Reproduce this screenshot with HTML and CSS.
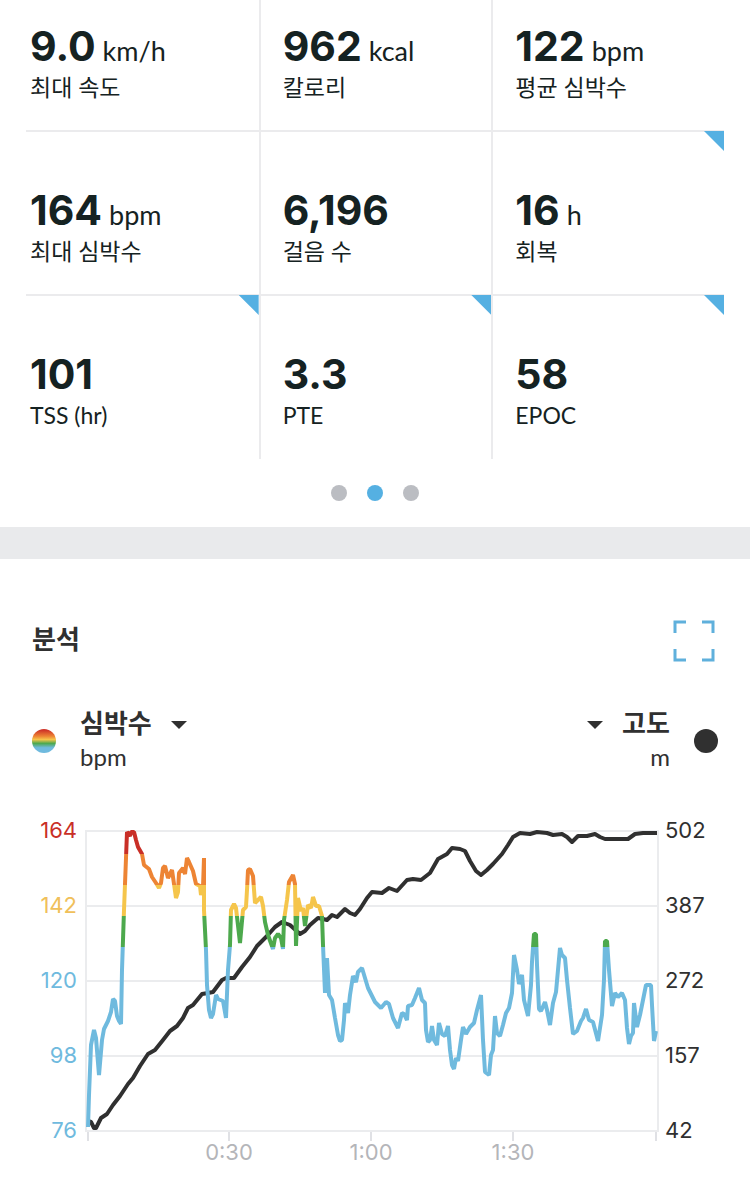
FILE: index.html
```html
<!DOCTYPE html>
<html lang="ko">
<head>
<meta charset="utf-8">
<meta name="viewport" content="width=device-width, initial-scale=1">
<title>분석</title>
<link rel="stylesheet" href="styles.css">
</head>
<body>
<main>
  <section class="summary">
    <div class="stats">
      <div class="stat"><p class="reading"><strong class="value">9.0</strong> <span class="unit">km/h</span></p><p class="label">최대 속도</p></div>
      <div class="stat"><p class="reading"><strong class="value">962</strong> <span class="unit">kcal</span></p><p class="label">칼로리</p></div>
      <div class="stat"><p class="reading"><strong class="value">122</strong> <span class="unit">bpm</span></p><p class="label">평균 심박수</p></div>
      <div class="stat"><p class="reading"><strong class="value">164</strong> <span class="unit">bpm</span></p><p class="label">최대 심박수</p></div>
      <div class="stat"><p class="reading"><strong class="value">6,196</strong></p><p class="label">걸음 수</p></div>
      <div class="stat flagged"><p class="reading"><strong class="value">16</strong> <span class="unit">h</span></p><p class="label">회복</p></div>
      <div class="stat flagged"><p class="reading"><strong class="value">101</strong></p><p class="label">TSS (hr)</p></div>
      <div class="stat flagged"><p class="reading"><strong class="value">3.3</strong></p><p class="label">PTE</p></div>
      <div class="stat flagged"><p class="reading"><strong class="value">58</strong></p><p class="label">EPOC</p></div>
    </div>
    <nav class="pager" aria-label="페이지">
      <button class="dot" type="button" aria-label="1"></button>
      <button class="dot current" type="button" aria-label="2" aria-current="true"></button>
      <button class="dot" type="button" aria-label="3"></button>
    </nav>
  </section>

  <section class="analysis">
    <header class="heading">
      <h2 class="title">분석</h2>
      <button class="expand" type="button" aria-label="전체 화면">
        <svg class="expand-icon" viewBox="0 0 42 42" aria-hidden="true">
          <path d="M13 2H2V13M29 2H40V13M13 40H2V29M29 40H40V29"/>
        </svg>
      </button>
    </header>

    <div class="legend">
      <div class="series">
        <span class="swatch zones"></span>
        <div class="series-text">
          <div class="picker">
            <select class="select" aria-label="왼쪽 축"><option>심박수</option></select>
            <svg class="caret" viewBox="0 0 16 8" aria-hidden="true"><path d="M0 0H16L8 8Z"/></svg>
          </div>
          <p class="series-unit">bpm</p>
        </div>
      </div>
      <div class="series end">
        <span class="swatch"></span>
        <div class="series-text">
          <div class="picker">
            <select class="select" aria-label="오른쪽 축"><option>고도</option></select>
            <svg class="caret" viewBox="0 0 16 8" aria-hidden="true"><path d="M0 0H16L8 8Z"/></svg>
          </div>
          <p class="series-unit">m</p>
        </div>
      </div>
    </div>

    <svg class="chart" viewBox="0 810 750 370" role="img" aria-label="심박수, 고도">
      <defs>
        <linearGradient id="zones" gradientUnits="userSpaceOnUse" x1="0" y1="831" x2="0" y2="1131">
          <stop offset="0.077" stop-color="#c92f27"/><stop offset="0.077" stop-color="#ed8434"/>
          <stop offset="0.18" stop-color="#ed8434"/><stop offset="0.18" stop-color="#f5c54b"/>
          <stop offset="0.283" stop-color="#f5c54b"/><stop offset="0.283" stop-color="#4da94d"/>
          <stop offset="0.387" stop-color="#4da94d"/><stop offset="0.387" stop-color="#6fbade"/>
        </linearGradient>
      </defs>
      <path class="grid" d="M86 831H658M86 906H658M86 981H658M86 1056H658M86 1131H658M86 830V1132M658 830V1132"/>
      <path class="ticks" d="M88 1132V1141M229 1132V1141M371 1132V1141M513 1132V1141M656 1132V1141"/>
      <polyline class="line altitude" points="88,1121 91,1122 94,1128 96,1128 101,1118 107,1114 113,1105 120,1096 128,1084 133,1078 140,1066 148,1054 155,1050 163,1040 170,1031 177,1026 183,1018 188,1008 193,1005 202,994 208,993 213,992 222,980 226,978 234,978 242,967 250,957 257,946 267,936 275,927 282,922 290,925 300,934 305,931 310,925 318,918 323,919 327,920 332,915 337,917 345,909 350,913 355,915 360,909 367,898 372,892 382,893 389,888 397,891 407,880 413,879 421,880 430,873 438,859 447,854 452,848 460,849 465,851 470,861 476,871 481,875 487,870 493,864 502,854 508,845 513,837 520,833 530,834 537,832 547,833 553,835 562,834 567,837 572,842 578,836 587,836 595,834 600,837 605,839 628,839 635,834 643,833 657,833"/>
      <polyline class="line heart" points="88,1127 89,1095 91,1045 94,1030 96,1038 99,1075 102,1040 104,1029 108,1021 111,1012 113,999 115,1001 117,1016 119,1021 121,1024 122,970 124,910 127,832 130,836 131,832 134,832 136,840 138,847 142,854 144,865 149,869 152,877 156,883 159,888 161,883 163,868 165,866 168,878 172,870 174,884 176,898 178,892 179,873 183,868 185,874 187,858 189,862 193,871 196,884 200,886 201,895 203,887 204,858 204,910 206,950 207,985 209,1010 211,1018 213,1014 216,995 218,999 223,1001 226,1018 228,970 230,945 231,910 234,904 236,908 240,943 243,910 246,907 247,890 248,870 250,869 253,876 255,903 258,900 261,897 263,906 265,922 268,935 273,949 275,938 278,934 281,938 283,949 284,920 287,900 289,882 293,875 295,884 296,946 298,898 301,911 303,908 305,926 308,905 311,908 313,897 316,906 319,906 322,916 323,945 325,993 327,958 329,995 332,1000 335,1018 338,1035 340,1041 342,1040 344,1020 345,1003 348,1013 350,995 353,976 356,982 358,972 362,968 368,988 375,1002 381,1008 386,1002 389,1004 393,1018 398,1028 402,1013 404,1014 407,1020 408,1006 412,1005 415,998 419,988 422,1000 425,1003 426,1030 428,1042 430,1040 432,1026 434,1040 437,1045 439,1023 442,1034 445,1036 448,1026 450,1050 452,1065 454,1069 456,1058 458,1061 461,1040 463,1027 466,1034 470,1027 474,1023 477,1010 481,995 483,1040 485,1072 489,1075 491,1055 493,1050 495,1016 497,1033 500,1036 503,1025 506,1013 509,1008 512,993 514,955 517,970 519,984 522,975 524,1000 528,1016 531,985 532,962 534,934 536,934 537,965 539,1009 541,1011 545,1002 547,1010 550,1025 553,1003 556,992 558,970 560,948 562,955 565,958 567,980 570,1008 573,1034 577,1031 581,1021 583,1018 586,1009 589,1020 593,1022 598,1041 602,1015 604,980 605,941 607,941 609,970 612,1006 615,993 618,997 622,993 625,1000 627,1028 629,1044 631,1036 633,1033 634,1003 637,1027 640,1015 643,1000 646,985 651,985 652,1005 654,1041 656,1031"/>
      <g class="axis left">
        <text class="max" x="77" y="838">164</text>
        <text class="upper" x="77" y="913">142</text>
        <text x="77" y="988">120</text>
        <text x="77" y="1063">98</text>
        <text x="77" y="1138">76</text>
      </g>
      <g class="axis right">
        <text x="665" y="838">502</text>
        <text x="665" y="913">387</text>
        <text x="665" y="988">272</text>
        <text x="665" y="1063">157</text>
        <text x="665" y="1138">42</text>
      </g>
      <g class="axis time">
        <text x="229" y="1160">0:30</text>
        <text x="371" y="1160">1:00</text>
        <text x="513" y="1160">1:30</text>
      </g>
    </svg>
  </section>
</main>
</body>
</html>
```

FILE: styles.css
```css
* { box-sizing: border-box; }

body {
  margin: 0;
  background: #fff;
  color: #303030;
  font-family: Lato, "Noto Sans CJK KR", sans-serif;
}

p, h2 { margin: 0; }

button {
  padding: 0;
  border: 0;
  background: none;
  cursor: pointer;
}

/* Summary grid */
.summary {
  padding: 0 26px 26px;
  border-bottom: 32px solid #e9eaec;
}

.stats {
  display: grid;
  grid-template-columns: repeat(3, 1fr);
  color: #152222;
}

.stat {
  position: relative;
  min-height: 164px;
  padding: 58px 0 0 22px;
  border-bottom: 2px solid #ebebed;
  border-left: 2px solid #ebebed;
}

.stat:nth-child(3n + 1) {
  padding-left: 4px;
  border-left: 0;
}

.stat:nth-child(-n + 3) {
  min-height: 132px;
  padding-top: 26px;
}

.stat:nth-child(n + 7) {
  min-height: 163px;
  border-bottom: 0;
}

.flagged::after {
  content: "";
  position: absolute;
  top: -1px;
  right: 0;
  width: 20px;
  height: 20px;
  background: #55b0e2;
  clip-path: polygon(0 0, 100% 0, 100% 100%);
}

.reading {
  display: flex;
  align-items: baseline;
  gap: 7px;
  min-height: 49px;
  line-height: 40px;
  white-space: nowrap;
}

.value {
  font-family: Inter, sans-serif;
  font-size: 41px;
  font-weight: 700;
}

.unit { font-size: 27px; }

.label {
  font-size: 23px;
  line-height: 24px;
}

.pager {
  display: flex;
  justify-content: center;
  gap: 20px;
  padding-top: 26px;
}

.dot {
  width: 16px;
  height: 16px;
  border-radius: 50%;
  background: #bbbdc2;
}

.dot.current { background: #55b0e2; }

/* Analysis */
.heading {
  display: flex;
  align-items: center;
  justify-content: space-between;
  padding: 61px 35px 0 32px;
}

.title {
  padding-bottom: 4px;
  font-size: 26px;
  font-weight: 700;
  line-height: 36px;
}

.expand-icon {
  display: block;
  width: 42px;
  height: 42px;
  fill: none;
  stroke: #5fb0dc;
  stroke-width: 3;
}

.legend {
  display: flex;
  justify-content: space-between;
  padding: 43px 32px 0;
}

.series {
  display: flex;
  align-items: center;
  gap: 24px;
}

.series.end,
.series.end .picker { flex-direction: row-reverse; }

.series.end { text-align: right; }

.swatch {
  width: 24px;
  height: 24px;
  border-radius: 50%;
  background: #303030;
}

.swatch.zones {
  background: linear-gradient(#cf3428 5%, #ed8434 30%, #f5c54b 44%, #4da94d 60%, #6fbade 78%);
}

.picker {
  display: flex;
  align-items: center;
  gap: 19px;
}

.select {
  padding: 0 0 6px;
  border: 0;
  appearance: none;
  background: none;
  color: inherit;
  font: 700 26px/34px "Noto Sans CJK KR", sans-serif;
}

.caret {
  width: 16px;
  height: 8px;
  fill: #303030;
}

.series-unit {
  padding-bottom: 8px;
  font-size: 24px;
  line-height: 24px;
}

.chart {
  display: block;
  width: 100%;
  margin-top: 33px;
}

.grid,
.ticks {
  fill: none;
  stroke: #ebecee;
  stroke-width: 2;
}

.ticks { stroke: #e0e1e5; }

.line {
  fill: none;
  stroke-width: 4;
  stroke-linejoin: round;
}

.altitude { stroke: #303030; }

.heart {
  stroke: url(#zones);
  stroke-linejoin: bevel;
}

.axis {
  font-family: Inter, sans-serif;
  font-size: 22px;
}

.left {
  fill: #6fbade;
  text-anchor: end;
}

.max { fill: #c92f27; }

.upper { fill: #f0c05a; }

.right { fill: #303030; }

.time {
  fill: #b4b5b9;
  text-anchor: middle;
}
```
